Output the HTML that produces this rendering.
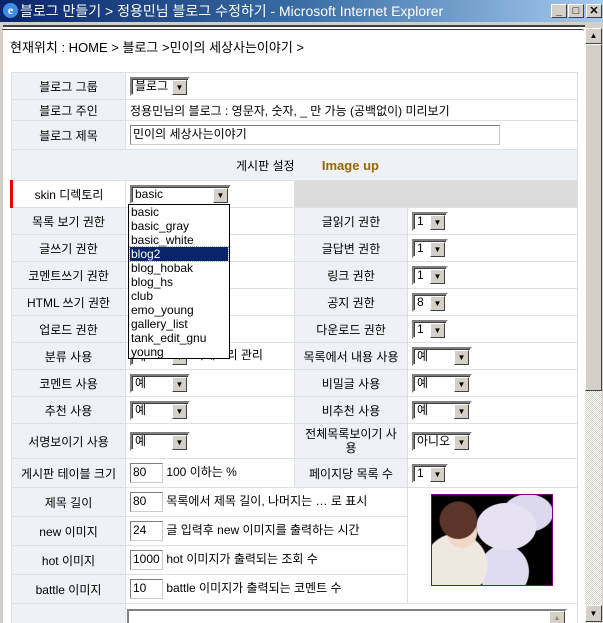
<!DOCTYPE html>
<html style="width:603px;height:623px;overflow:hidden"><head><meta charset="utf-8">
<style>
*{margin:0;padding:0;box-sizing:border-box}
body{width:603px;height:623px;overflow:hidden;background:#d4d0c8;font-family:"Liberation Sans","Noto Sans CJK KR",sans-serif;font-size:12px;color:#000;position:relative}
.abs{position:absolute}
#title{left:0;top:0;width:603px;height:22px;background:linear-gradient(90deg,#0a246a,#3a6ea5 50%,#a6caf0);color:#fff;font-size:14px;line-height:22px;padding-left:20px;white-space:nowrap}
.tb{top:4px;width:16px;height:14px;background:#d4d0c8;border:1px solid;border-color:#fff #404040 #404040 #fff;color:#000;font-size:11px;line-height:12px;text-align:center;font-weight:bold}
#content{left:3px;top:25px;width:582px;height:598px;background:#fff;border-top:2px solid #404040}
#sb{left:585px;top:28px;width:17px;height:595px;background:repeating-conic-gradient(#d4d0c8 0 25%,#fff 0 50%) 0 0/2px 2px}
.btn{background:#d4d0c8;border:1px solid;border-color:#fff #404040 #404040 #fff}
table{position:absolute;left:10px;top:72px;border-collapse:collapse;table-layout:fixed;width:566px}
td{border:1px solid #dde1e6;padding:0 4px;white-space:nowrap;overflow:hidden}
td.l{background:#eef1f6;text-align:center}
.sel{display:inline-block;height:19px;border:2px solid;border-color:#808080 #fff #fff #808080;box-shadow:inset 1px 1px #404040;background:#fff;position:relative;vertical-align:middle;line-height:15px;padding-left:3px;font-size:12px}
.sel i{position:absolute;right:1px;top:1px;width:15px;height:15px;background:#d4d0c8;border:1px solid;border-color:#fff #404040 #404040 #fff;font-style:normal;font-size:8px;text-align:center;line-height:13px}
.inp{display:inline-block;height:20px;border:1px solid #7f7f7f;border-right-color:#ccc;border-bottom-color:#ccc;vertical-align:middle;padding-left:2px;line-height:17px;font-size:12px;background:#fff}
</style></head><body>
<div id="title" class="abs"><span class="abs" style="left:3px;top:3px;width:15px;height:15px;border-radius:50%;background:#3a8ee6;color:#fff;font:bold 12px/15px 'Liberation Serif',serif;text-align:center">e</span>블로그 만들기 &gt; 정용민님 블로그 수정하기 - Microsoft Internet Explorer</div>
<div class="abs tb" style="left:551px">_</div>
<div class="abs tb" style="left:568px">□</div>
<div class="abs tb" style="left:586px">✕</div>
<div id="content" class="abs"></div>
<div class="abs" style="left:2px;top:29px;width:582px;height:2px;border-top:1px solid #404040;border-radius:6px 14px 0 0"></div>
<div id="sb" class="abs"></div>
<div class="abs btn" style="left:585px;top:28px;width:17px;height:16px;font-size:8px;text-align:center;line-height:14px">▲</div>
<div class="abs btn" style="left:585px;top:44px;width:17px;height:347px"></div>
<div class="abs btn" style="left:585px;top:605px;width:17px;height:17px;font-size:8px;text-align:center;line-height:15px">▼</div>
<div class="abs" style="left:10px;top:37px;font-size:13px">현재위치 : HOME &gt; 블로그 &gt;민이의 세상사는이야기 &gt;</div>
<table>
<colgroup><col style="width:114px"><col style="width:169px"><col style="width:113px"><col style="width:170px"></colgroup>
<tr style="height:27px"><td class="l">블로그 그룹</td><td colspan="3"><span class="sel" style="width:60px">블로그<i>▼</i></span></td></tr>
<tr style="height:21px"><td class="l">블로그 주인</td><td colspan="3">정용민님의 블로그 : 영문자, 숫자, _ 만 가능 (공백없이) 미리보기</td></tr>
<tr style="height:29px;border-bottom:1px solid #aaa"><td class="l">블로그 제목</td><td colspan="3"><span class="inp" style="width:370px">민이의 세상사는이야기</span></td></tr>
<tr style="height:31px"><td colspan="4" class="l" style="padding-left:30px">게시판 설정 <b style="color:#996600;margin-left:24px;font-size:13px">Image up</b></td></tr>
<tr style="height:27px"><td class="l" style="background:#fff;border-left:3px solid #e00">skin 디렉토리</td><td><span class="sel" style="width:101px">basic<i>▼</i></span></td><td colspan="2" style="background:#dcdcdc"></td></tr>
<tr style="height:27px"><td class="l">목록 보기 권한</td><td></td><td class="l">글읽기 권한</td><td><span class="sel" style="width:36px">1<i>▼</i></span></td></tr>
<tr style="height:27px"><td class="l">글쓰기 권한</td><td></td><td class="l">글답변 권한</td><td><span class="sel" style="width:36px">1<i>▼</i></span></td></tr>
<tr style="height:27px"><td class="l">코멘트쓰기 권한</td><td></td><td class="l">링크 권한</td><td><span class="sel" style="width:36px">1<i>▼</i></span></td></tr>
<tr style="height:27px"><td class="l">HTML 쓰기 권한</td><td></td><td class="l">공지 권한</td><td><span class="sel" style="width:36px">8<i>▼</i></span></td></tr>
<tr style="height:27px"><td class="l">업로드 권한</td><td></td><td class="l">다운로드 권한</td><td><span class="sel" style="width:36px">1<i>▼</i></span></td></tr>
<tr style="height:27px"><td class="l">분류 사용</td><td><span class="sel" style="width:60px">예<i>▼</i></span> 카테고리 관리</td><td class="l">목록에서 내용 사용</td><td><span class="sel" style="width:60px">예<i>▼</i></span></td></tr>
<tr style="height:27px"><td class="l">코멘트 사용</td><td><span class="sel" style="width:60px">예<i>▼</i></span></td><td class="l">비밀글 사용</td><td><span class="sel" style="width:60px">예<i>▼</i></span></td></tr>
<tr style="height:27px"><td class="l">추천 사용</td><td><span class="sel" style="width:60px">예<i>▼</i></span></td><td class="l">비추천 사용</td><td><span class="sel" style="width:60px">예<i>▼</i></span></td></tr>
<tr style="height:35px"><td class="l">서명보이기 사용</td><td><span class="sel" style="width:60px">예<i>▼</i></span></td><td class="l" style="line-height:14px">전체목록보이기 사<br>용</td><td><span class="sel" style="width:60px">아니오<i>▼</i></span></td></tr>
<tr style="height:29px"><td class="l">게시판 테이블 크기</td><td><span class="inp" style="width:33px">80</span> 100 이하는 %</td><td class="l">페이지당 목록 수</td><td><span class="sel" style="width:36px">1<i>▼</i></span></td></tr>
<tr style="height:29px"><td class="l">제목 길이</td><td colspan="2"><span class="inp" style="width:33px">80</span> 목록에서 제목 길이, 나머지는 … 로 표시</td><td rowspan="4" style="position:relative"><div class="abs" style="left:23px;top:6px;width:122px;height:92px;border:1px solid #800080;background:radial-gradient(circle at 22% 28%,#5a3528 0 16%,transparent 17%),radial-gradient(circle at 25% 42%,#f0d8c8 0 14%,transparent 15%),radial-gradient(circle at 20% 78%,#eee8e0 0 26%,transparent 27%),radial-gradient(ellipse at 62% 35%,#e6e2f4 0 28%,transparent 29%),radial-gradient(ellipse at 80% 20%,#dcd8ee 0 18%,transparent 19%),radial-gradient(ellipse at 60% 85%,#e0dcf0 0 24%,transparent 25%),#000"></div></td></tr>
<tr style="height:29px"><td class="l">new 이미지</td><td colspan="2"><span class="inp" style="width:33px">24</span> 글 입력후 new 이미지를 출력하는 시간</td></tr>
<tr style="height:29px"><td class="l">hot 이미지</td><td colspan="2"><span class="inp" style="width:33px">1000</span> hot 이미지가 출력되는 조회 수</td></tr>
<tr style="height:29px"><td class="l">battle 이미지</td><td colspan="2"><span class="inp" style="width:33px">10</span> battle 이미지가 출력되는 코멘트 수</td></tr>
<tr style="height:20px"><td class="l"></td><td colspan="3" style="position:relative;height:20px"><div class="abs" style="left:1px;top:5px;width:440px;height:30px;border:2px solid;border-color:#808080 #fff #fff #808080;background:#fff"><div class="abs btn" style="right:0;top:0;width:16px;height:16px;font-size:7px;text-align:center;line-height:14px;color:#888">▲</div></div></td></tr>
</table>
<div class="abs" style="left:128px;top:204px;width:102px;height:155px;border:1px solid #000;background:#fff;font-size:12px;line-height:14px;padding:0 2px">
<div>basic</div><div>basic_gray</div><div>basic_white</div><div style="background:#0a246a;color:#fff;margin:0 -1px;padding:0 1px;outline:1px dotted #aaa">blog2</div><div>blog_hobak</div><div>blog_hs</div><div>club</div><div>emo_young</div><div>gallery_list</div><div>tank_edit_gnu</div><div>young</div>
</div>
</body></html>
